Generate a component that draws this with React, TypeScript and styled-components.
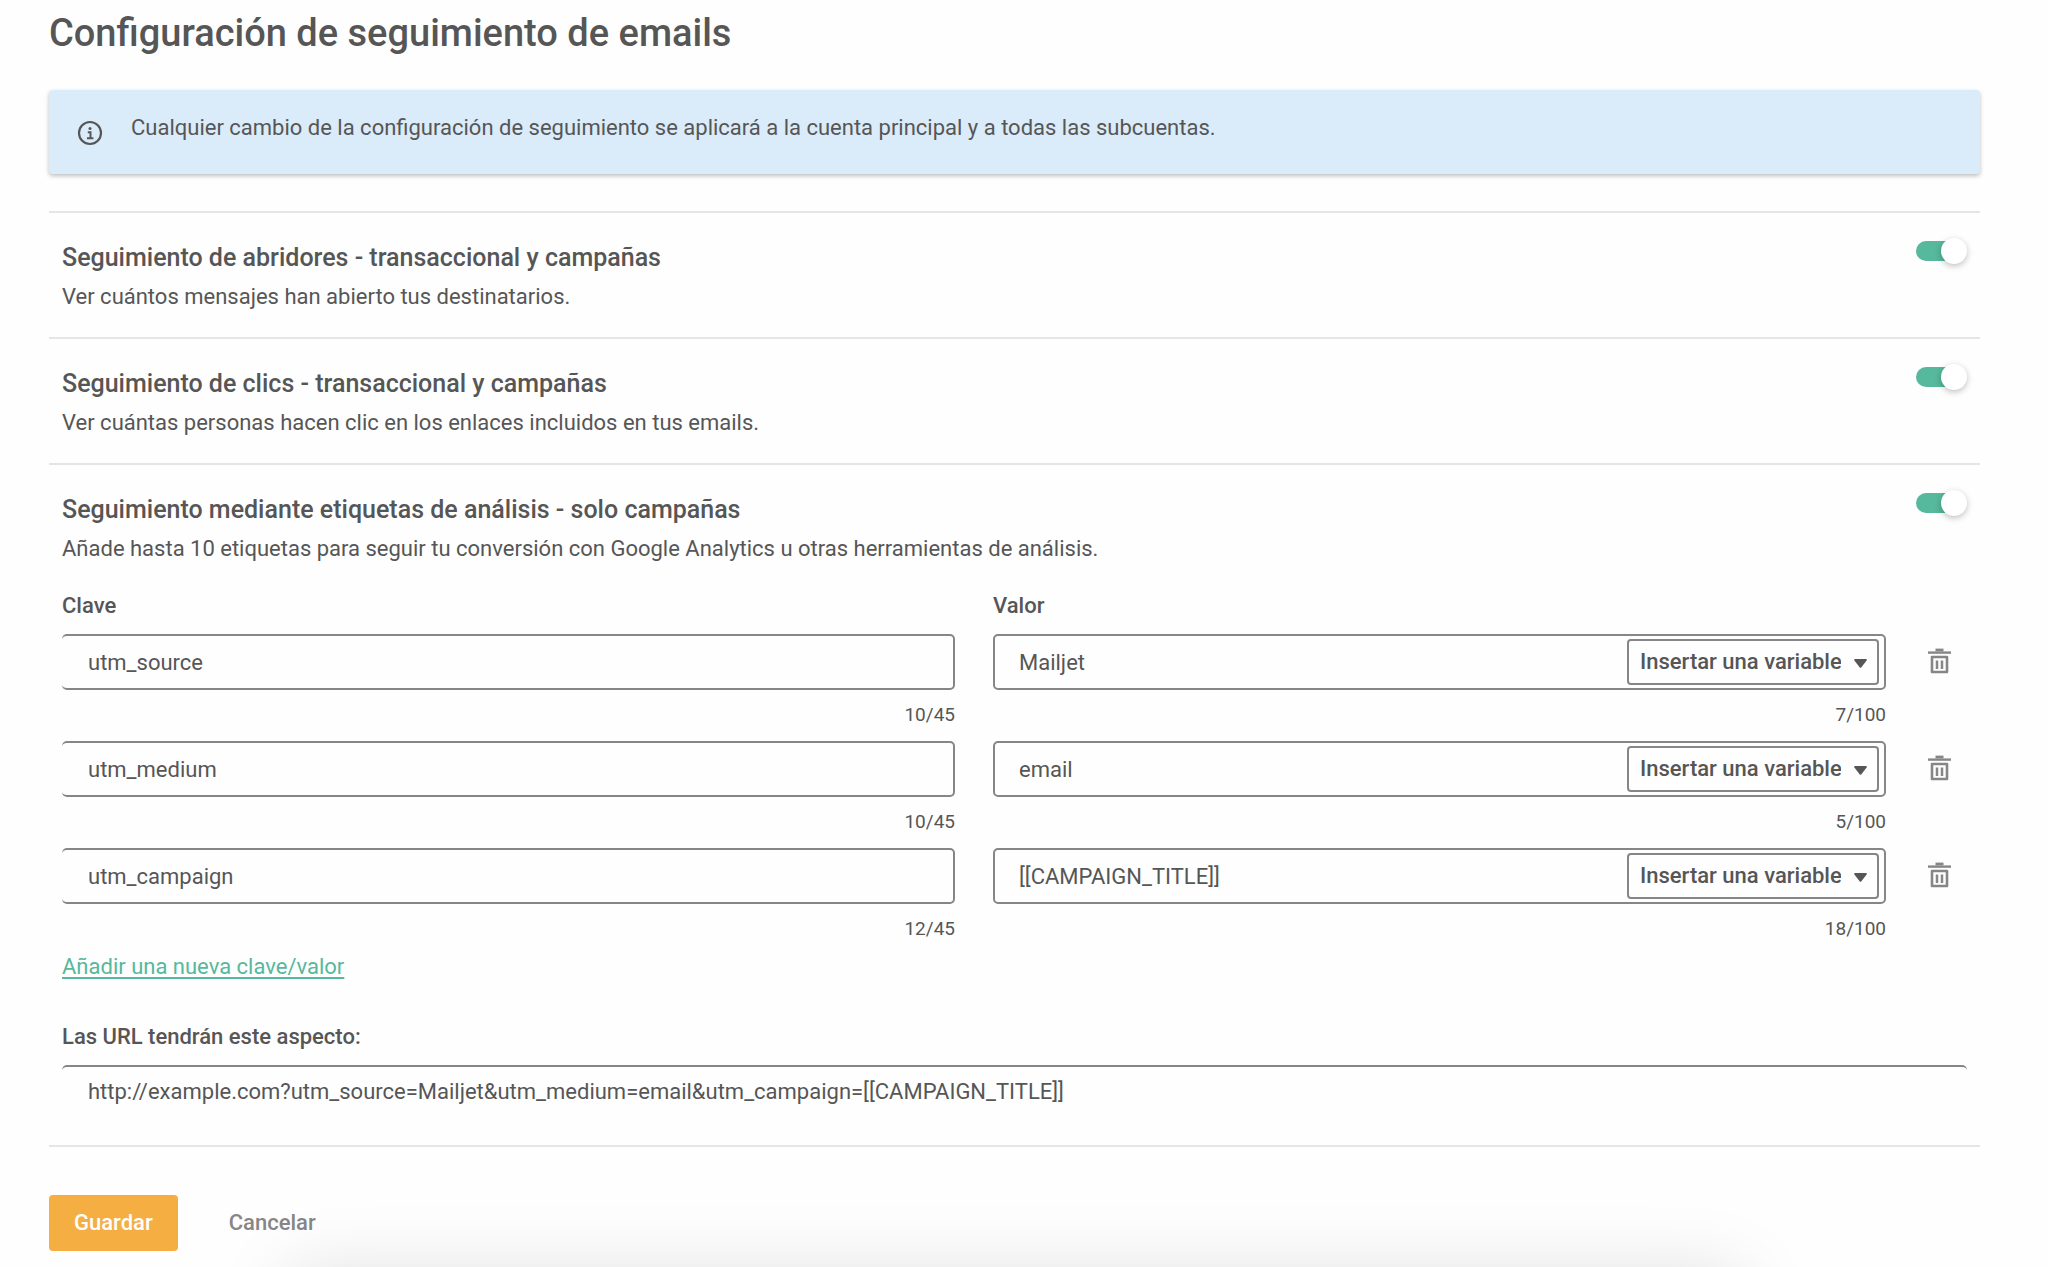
import React, { useState } from "react";
import styled, { createGlobalStyle } from "styled-components";

const color = {
  page: "#fefefe",
  text: "#565656",
  muted: "#868686",
  border: "#868686",
  line: "#e5e5e5",
  green: "#56b89c",
  orange: "#f5ae42",
  info: "#daebfa",
};

const Global = createGlobalStyle`
  *, *::before, *::after { box-sizing: border-box; }
  body {
    margin: 0;
    overflow-x: hidden;
    background: ${color.page};
    color: ${color.text};
    font-family: Roboto, "Liberation Sans", sans-serif;
    font-size: 22px;
    line-height: 32px;
  }
`;

const Page = styled.main`
  padding: 9px 68px 12px 49px;
`;

const Title = styled.h1`
  margin: 0 0 33px;
  font-size: 38px;
  font-weight: 500;
  line-height: 48px;
`;

const Notice = styled.div`
  display: flex;
  align-items: flex-start;
  gap: 28px;
  min-height: 84px;
  padding: 22px 28px;
  border-radius: 4px;
  background: ${color.info};
  box-shadow: 0 2px 4px rgba(0, 0, 0, 0.25);
`;

const NoticeIcon = styled.svg`
  flex: none;
  width: 26px;
  height: 26px;
  margin-top: 8px;
`;

const NoticeText = styled.p`
  margin: 0;
`;

const Form = styled.form`
  margin: 37px 0 0;
`;

const Section = styled.section`
  padding: 24px 13px;
  border-top: 2px solid ${color.line};
`;

const SectionHead = styled.div`
  display: flex;
  align-items: flex-start;
  justify-content: space-between;
`;

const SectionTitle = styled.h2`
  margin: 5px 0 7px;
  font-size: 25px;
  font-weight: 500;
  line-height: 32px;
`;

const SectionText = styled.p`
  margin: 0;
`;

const Switch = styled.input`
  appearance: none;
  display: flex;
  align-items: center;
  flex: none;
  width: 51px;
  height: 20px;
  margin: 4px 0 0;
  border-radius: 10px;
  background: linear-gradient(to right, #c4c4c4 42px, transparent 42px);
  cursor: pointer;

  &::before {
    content: "";
    width: 26px;
    height: 26px;
    border-radius: 50%;
    background: #fff;
    box-shadow: 0 2px 6px rgba(0, 0, 0, 0.25);
  }
  &:checked {
    justify-content: flex-end;
    background: linear-gradient(to right, ${color.green} 42px, transparent 42px);
  }
`;

const PairGrid = styled.div`
  display: grid;
  grid-template-columns: 1fr 1fr 81px;
  column-gap: 38px;
  margin-right: -38px;
`;

const ColumnLabel = styled.span`
  margin: 25px 0 12px;
  font-weight: 500;
`;

const Field = styled.div`
  display: flex;
  flex-direction: column;
  min-width: 0;
`;

const TextInput = styled.input`
  width: 100%;
  height: 56px;
  padding: 0 26px;
  border: 2px solid ${color.border};
  border-left-width: 0;
  border-radius: 5px;
  background: ${color.page};
  color: inherit;
  font: inherit;
`;

const ValueBox = styled.div`
  display: flex;
  align-items: center;
  height: 56px;
  padding: 0 5px 0 0;
  border: 2px solid ${color.border};
  border-radius: 5px;
  background: ${color.page};
`;

const ValueInput = styled.input`
  flex: 1;
  min-width: 0;
  height: 100%;
  padding: 0 24px;
  border: 0;
  background: none;
  color: inherit;
  font: inherit;
`;

const VariablePicker = styled.span`
  position: relative;
  flex: none;
`;

const VariableSelect = styled.select`
  appearance: none;
  width: 252px;
  height: 46px;
  padding: 0 36px 0 11px;
  border: 2px solid ${color.border};
  border-radius: 4px;
  background: ${color.page};
  color: inherit;
  font: inherit;
  font-weight: 500;
  cursor: pointer;
`;

const Caret = styled.svg`
  position: absolute;
  top: 20px;
  right: 12px;
  width: 13px;
  height: 9px;
  pointer-events: none;
`;

const Counter = styled.span`
  margin: 6px 0 8px;
  text-align: right;
  font-size: 19px;
  line-height: 37px;
`;

const IconButton = styled.button`
  align-self: start;
  width: 30px;
  height: 54px;
  padding: 0;
  border: 0;
  background: none;
  color: ${color.muted};
  cursor: pointer;

  svg {
    display: block;
    margin: auto;
  }
`;

const AddLink = styled.a`
  display: block;
  width: fit-content;
  color: ${color.green};
  line-height: 24px;
  text-decoration: underline;
  text-decoration-thickness: 2px;
  text-underline-offset: 3px;
`;

const PreviewLabel = styled.label`
  display: block;
  margin: 42px 0 12px;
  font-weight: 500;
`;

const PreviewInput = styled(TextInput)`
  display: block;
  padding-bottom: 6px;
  border-width: 2px 0 0;
`;

const Actions = styled.div`
  display: flex;
  gap: 26px;
  padding-top: 48px;
  border-top: 2px solid ${color.line};
`;

const Button = styled.button<{ $primary?: boolean }>`
  height: 56px;
  padding: 0 25px;
  border: 0;
  border-radius: 4px;
  background: ${(p) => (p.$primary ? color.orange : "transparent")};
  color: ${(p) => (p.$primary ? "#fff" : color.muted)};
  font: inherit;
  font-weight: 500;
  cursor: pointer;
`;

const BottomShade = styled.div`
  position: fixed;
  top: 100%;
  left: 14%;
  right: 15%;
  height: 100px;
  box-shadow: 0 8px 76px rgba(0, 0, 0, 0.13);
  pointer-events: none;
`;

const trackers = [
  {
    id: "opens",
    title: "Seguimiento de abridores - transaccional y campañas",
    text: "Ver cuántos mensajes han abierto tus destinatarios.",
  },
  {
    id: "clicks",
    title: "Seguimiento de clics - transaccional y campañas",
    text: "Ver cuántas personas hacen clic en los enlaces incluidos en tus emails.",
  },
];

const initialPairs = [
  { key: "utm_source", value: "Mailjet" },
  { key: "utm_medium", value: "email" },
  { key: "utm_campaign", value: "[[CAMPAIGN_TITLE]]" },
];

function InfoIcon() {
  return (
    <NoticeIcon viewBox="0 0 26 26" fill="none" stroke={color.text} aria-hidden="true">
      <circle cx="13" cy="13" r="11" strokeWidth="2.2" />
      <path d="M10.8 12.2h2.7V18M10 18.3h6.4" strokeWidth="2" />
      <circle cx="13" cy="8.6" r="1.5" fill={color.text} stroke="none" />
    </NoticeIcon>
  );
}

function TrashIcon() {
  return (
    <svg width="23" height="26" viewBox="0 0 23 26" fill="none" stroke="currentColor" aria-hidden="true">
      <path d="M0 4.6h23" strokeWidth="2.4" />
      <path d="M7.5 2h8" strokeWidth="2.8" />
      <path d="M4 9h15v15H4z" strokeWidth="2.6" strokeLinejoin="round" />
      <path d="M9 12.5V21M14 12.5V21" strokeWidth="2.5" />
    </svg>
  );
}

interface TrackerHeadProps {
  id: string;
  title: string;
  text: string;
}

function TrackerHead({ id, title, text }: TrackerHeadProps) {
  return (
    <SectionHead>
      <div>
        <SectionTitle>
          <label htmlFor={id}>{title}</label>
        </SectionTitle>
        <SectionText>{text}</SectionText>
      </div>
      <Switch id={id} type="checkbox" role="switch" defaultChecked />
    </SectionHead>
  );
}

export default function App() {
  const [pairs, setPairs] = useState(initialPairs);

  const edit = (index: number, change: Partial<(typeof initialPairs)[number]>) =>
    setPairs(pairs.map((p, i) => (i === index ? { ...p, ...change } : p)));

  const url = "http://example.com?" + pairs.map((p) => `${p.key}=${p.value}`).join("&");

  return (
    <>
      <Global />
      <Page>
        <Title>Configuración de seguimiento de emails</Title>
        <Notice role="note">
          <InfoIcon />
          <NoticeText>
            Cualquier cambio de la configuración de seguimiento se aplicará a la cuenta principal y a todas las
            subcuentas.
          </NoticeText>
        </Notice>

        <Form onSubmit={(e) => e.preventDefault()}>
          {trackers.map((t) => (
            <Section key={t.id}>
              <TrackerHead {...t} />
            </Section>
          ))}
          <Section>
            <TrackerHead
              id="tags"
              title="Seguimiento mediante etiquetas de análisis - solo campañas"
              text="Añade hasta 10 etiquetas para seguir tu conversión con Google Analytics u otras herramientas de análisis."
            />
            <PairGrid>
              <ColumnLabel id="key-label">Clave</ColumnLabel>
              <ColumnLabel id="value-label">Valor</ColumnLabel>
              <span />
              {pairs.map((p, i) => (
                <React.Fragment key={i}>
                  <Field>
                    <TextInput
                      type="text"
                      aria-labelledby="key-label"
                      maxLength={45}
                      value={p.key}
                      onChange={(e) => edit(i, { key: e.target.value })}
                    />
                    <Counter>{p.key.length}/45</Counter>
                  </Field>
                  <Field>
                    <ValueBox>
                      <ValueInput
                        type="text"
                        aria-labelledby="value-label"
                        maxLength={100}
                        value={p.value}
                        onChange={(e) => edit(i, { value: e.target.value })}
                      />
                      <VariablePicker>
                        <VariableSelect aria-label="Insertar una variable" defaultValue="">
                          <option value="">Insertar una variable</option>
                        </VariableSelect>
                        <Caret viewBox="0 0 13 9" aria-hidden="true">
                          <path d="M1 0h11q1.2 0.3 0.6 1.4L7.2 8.4q-0.7 0.8-1.4 0L0.4 1.4Q-0.2 0.3 1 0z" fill={color.text} />
                        </Caret>
                      </VariablePicker>
                    </ValueBox>
                    <Counter>{p.value.length}/100</Counter>
                  </Field>
                  <IconButton
                    type="button"
                    aria-label="Eliminar"
                    onClick={() => setPairs(pairs.filter((_, n) => n !== i))}
                  >
                    <TrashIcon />
                  </IconButton>
                </React.Fragment>
              ))}
            </PairGrid>
            <AddLink
              href="#"
              onClick={(e) => {
                e.preventDefault();
                setPairs([...pairs, { key: "", value: "" }]);
              }}
            >
              Añadir una nueva clave/valor
            </AddLink>
            <PreviewLabel htmlFor="preview">Las URL tendrán este aspecto:</PreviewLabel>
            <PreviewInput id="preview" type="text" readOnly value={url} />
          </Section>
          <Actions>
            <Button type="submit" $primary>
              Guardar
            </Button>
            <Button type="button">Cancelar</Button>
          </Actions>
        </Form>
      </Page>
      <BottomShade />
    </>
  );
}
